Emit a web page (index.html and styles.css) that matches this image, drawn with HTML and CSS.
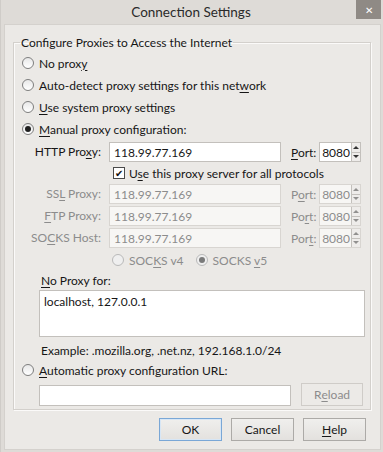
FILE: index.html
```html
<!DOCTYPE html>
<html lang="en">
<head>
  <meta charset="UTF-8">
  <title>Connection Settings</title>
  <link rel="stylesheet" href="styles.css">
</head>
<body>
  <div class="window">
    <div class="titlebar">
      <span class="title">Connection Settings</span>
      <span class="close">&#x2715;</span>
    </div>

    <div class="body">
      <fieldset class="group">
        <legend>Configure Proxies to Access the Internet</legend>

        <label class="row radio"><span class="dot"></span><span>No prox<u>y</u></span></label>
        <label class="row radio"><span class="dot"></span><span>Auto-detect proxy settings for this net<u>w</u>ork</span></label>
        <label class="row radio"><span class="dot"></span><span><u>U</u>se system proxy settings</span></label>
        <label class="row radio"><span class="dot on"></span><span><u>M</u>anual proxy configuration:</span></label>

        <div class="proxy-grid">
          <span class="plabel">HTTP Pro<u>x</u>y:</span>
          <span class="field">118.99.77.169</span>
          <span class="port-label"><u>P</u>ort:</span>
          <span class="port"><span class="port-val">8080</span><span class="spin"><i class="up"></i><i class="down"></i></span></span>

          <label class="check-row"><span class="box">&#x2714;</span><span>U<u>s</u>e this proxy server for all protocols</span></label>

          <span class="plabel off">SS<u>L</u> Proxy:</span>
          <span class="field off">118.99.77.169</span>
          <span class="port-label off">P<u>o</u>rt:</span>
          <span class="port off"><span class="port-val">8080</span><span class="spin"><i class="up"></i><i class="down"></i></span></span>

          <span class="plabel off"><u>F</u>TP Proxy:</span>
          <span class="field off">118.99.77.169</span>
          <span class="port-label off">Po<u>r</u>t:</span>
          <span class="port off"><span class="port-val">8080</span><span class="spin"><i class="up"></i><i class="down"></i></span></span>

          <span class="plabel off">SO<u>C</u>KS Host:</span>
          <span class="field off">118.99.77.169</span>
          <span class="port-label off">Por<u>t</u>:</span>
          <span class="port off"><span class="port-val">8080</span><span class="spin"><i class="up"></i><i class="down"></i></span></span>
        </div>

        <div class="socks-row">
          <label class="radio off"><span class="dot"></span><span>SOC<u>K</u>S v4</span></label>
          <label class="radio off"><span class="dot on"></span><span>SOCKS <u>v</u>5</span></label>
        </div>

        <div class="noproxy">
          <div class="np-label"><u>N</u>o Proxy for:</div>
          <div class="textarea">localhost, 127.0.0.1</div>
          <div class="example">Example: .mozilla.org, .net.nz, 192.168.1.0/24</div>
        </div>

        <label class="row radio"><span class="dot"></span><span><u>A</u>utomatic proxy configuration URL:</span></label>
        <div class="url-row">
          <span class="url-field"></span>
          <span class="btn disabled">R<u>e</u>load</span>
        </div>
      </fieldset>

      <div class="buttons">
        <span class="btn default">OK</span>
        <span class="btn">Cancel</span>
        <span class="btn"><u>H</u>elp</span>
      </div>
    </div>
  </div>
</body>
</html>
```

FILE: styles.css
```css
* { box-sizing: border-box; }
body {
  margin: 0;
  background: #e6e3df;
  font-family: 'Lato', sans-serif;
  font-size: 12px;
  color: #161616;
}
u { text-decoration-thickness: 1px; text-underline-offset: 2px; }

.window {
  width: 383px;
  height: 452px;
  padding: 0 2px 2px 3px;
  background: #dedbd7;
  border-left: 1px solid #cfccc8;
}
.titlebar {
  height: 24px;
  display: flex;
  align-items: flex-start;
}
.title {
  flex: 1;
  text-align: center;
  padding-top: 4px;
  padding-left: 22px;
  font-size: 13.5px;
  color: #2a2a2a;
}
.close {
  width: 25px;
  height: 19px;
  margin-right: 0;
  background: #8f8a85;
  color: #fff;
  font-size: 10px;
  display: flex;
  align-items: center;
  justify-content: center;
}
.body {
  height: 426px;
  background: #ebe9e6;
  border: 1px solid #d4d1cd;
  padding: 10px 9px 0 8px;
}

.group {
  margin: 0;
  padding: 0 0 6px 8px;
  border: 1px solid #d3d0cc;
  box-shadow: inset 1px 1px 0 #fbfaf9, 1px 1px 0 #fbfaf9;
  height: 375px;
}
.group legend {
  padding: 0 1px;
  margin-left: -2px;
}

.row { height: 22px; display: flex; align-items: center; }
.group > .row:first-of-type { margin-top: 2px; }
.radio { display: flex; align-items: center; }
.dot {
  width: 12px;
  height: 12px;
  border-radius: 50%;
  border: 1px solid #7e7e7e;
  background: linear-gradient(#e8e8e8, #ffffff);
  margin-right: 5px;
  flex: none;
  display: flex;
  align-items: center;
  justify-content: center;
}
.dot.on::after {
  content: "";
  width: 6px;
  height: 6px;
  border-radius: 50%;
  background: #202020;
}
.off { color: #8c8c8c; }
.radio.off .dot { border-color: #b9b9b9; background: #efefef; }
.radio.off .dot.on::after { background: #7a7a7a; }

.proxy-grid {
  display: grid;
  grid-template-columns: 87px 172px 38px 42px;
  align-items: center;
  margin-top: 1px;
}
.plabel { text-align: right; padding-right: 8px; height: 22px; line-height: 22px; }
.port-label { padding-left: 10px; }
.field, .port {
  height: 20px;
  margin: 1px 0;
  background: #fff;
  border: 1px solid #c3c0bc;
  display: flex;
  align-items: center;
  padding-left: 4px;
}
.field.off, .port.off { background: #f7f6f4; border-color: #d8d5d1; }
.port { padding: 0; }
.port-val { flex: 1; text-align: right; padding-right: 1px; }
.spin {
  width: 9px;
  height: 18px;
  display: flex;
  flex-direction: column;
  border-left: 1px solid #c3c0bc;
  background: #eeecea;
}
.spin i { flex: 1; display: flex; align-items: center; justify-content: center; }
.spin i + i { border-top: 1px solid #c3c0bc; }
.spin .up::after {
  content: ""; border: 3px solid transparent; border-bottom: 3px solid #333; border-top: 0;
}
.spin .down::after {
  content: ""; border: 3px solid transparent; border-top: 3px solid #333; border-bottom: 0;
}
.off .spin i::after { opacity: .5; }
.check-row {
  grid-column: 2 / 5;
  height: 20px;
  display: flex;
  align-items: center;
  padding-left: 4px;
}
.box {
  width: 12px;
  height: 12px;
  border: 1px solid #4a4a4a;
  background: #fff;
  font-size: 10px;
  line-height: 10px;
  text-align: center;
  margin-right: 4px;
  color: #111;
}

.socks-row {
  height: 22px;
  display: flex;
  align-items: center;
  gap: 12px;
  padding-left: 90px;
}

.noproxy { padding-left: 17px; }
.np-label { height: 19px; line-height: 20px; padding-left: 2px; }
.textarea {
  height: 47px;
  width: 326px;
  background: #fff;
  border: 1px solid #c3c0bc;
  padding: 3px 4px;
}
.example { height: 22px; line-height: 27px; padding-left: 2px; }

.url-row {
  display: flex;
  align-items: flex-end;
  gap: 10px;
  padding-left: 17px;
  margin-top: 2px;
}
.url-field {
  width: 252px;
  height: 21px;
  background: #fff;
  border: 1px solid #c3c0bc;
}

.btn {
  width: 63px;
  height: 23px;
  display: flex;
  align-items: center;
  justify-content: center;
  border: 1px solid #acaaa7;
  background: linear-gradient(#f0efed, #e3e1de);
}
.url-row .btn { width: 62px; }
.btn.disabled { color: #8c8c8c; border-color: #cfccc8; background: #eceae7; }
.btn.default { border-color: #7aa7d6; box-shadow: inset 0 0 0 1px #d7e6f5; }

.buttons {
  display: flex;
  justify-content: flex-end;
  gap: 9px;
  padding-right: 5px;
  margin-top: 8px;
}
```
